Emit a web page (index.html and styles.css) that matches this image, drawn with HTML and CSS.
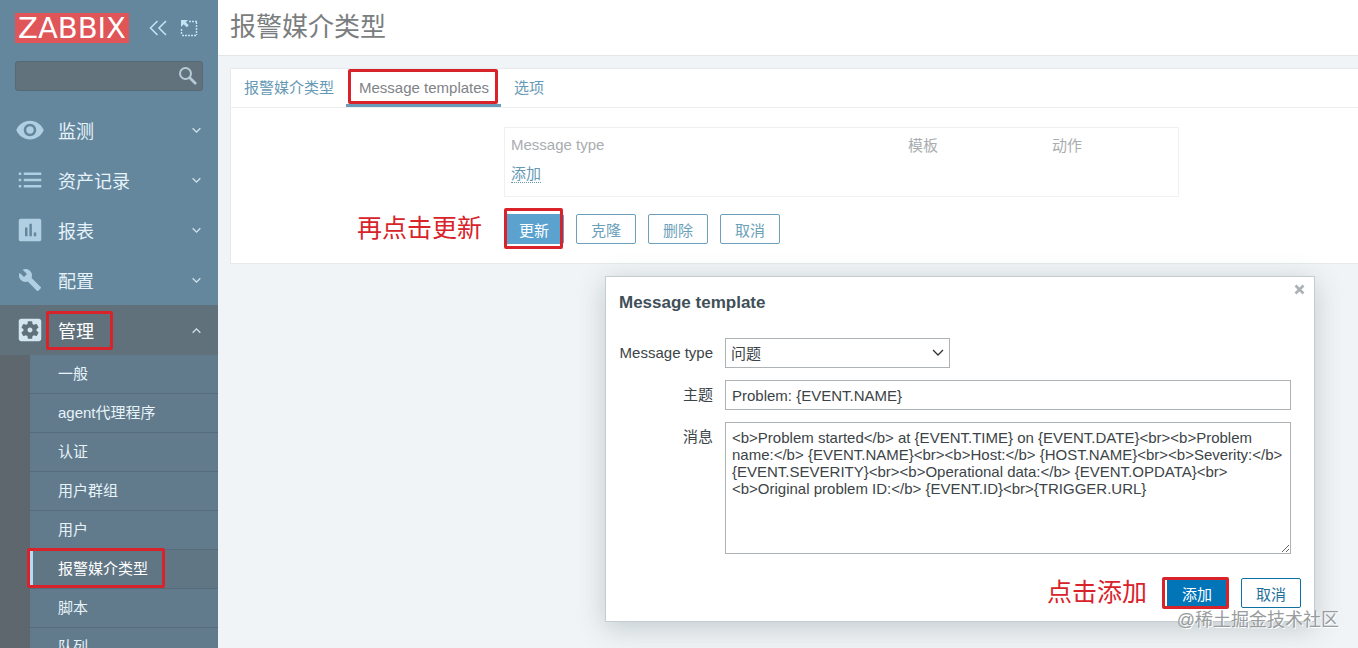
FILE: index.html
```html
<!DOCTYPE html>
<html lang="zh-CN">
<head>
  <meta charset="UTF-8" />
  <meta name="viewport" content="width=device-width, initial-scale=1.0" />
  <title>报警媒介类型</title>
  <link rel="stylesheet" href="styles.css">
</head>
<body>
  <aside class="sidebar">
    <div class="sidebar-header">
      <a href="#" class="logo">ZABBIX</a>
      <button type="button" class="icon-button" aria-label="Collapse sidebar">
        <svg width="20" height="18" viewBox="0 0 20 18"><path d="M9.500 2L2.500 9l7 7M18 2l-7 7 7 7" fill="none" stroke="currentColor" stroke-width="1.600"/></svg>
      </button>
      <button type="button" class="icon-button" aria-label="Hide sidebar">
        <svg width="18" height="18" viewBox="0 0 18 18"><path d="M9 2.500h8M16.500 3v13M16 16.500H1M1.500 15V9" fill="none" stroke="currentColor" stroke-width="1.400" stroke-dasharray="2 1"/><path d="M1 1h7L5.800 3.200l3 3-2.100 2.100-3-3L1 8z" fill="currentColor"/></svg>
      </button>
    </div>

    <form class="search">
      <input type="text" class="search-input" aria-label="搜索">
      <button type="button" class="search-button" aria-label="搜索">
        <svg width="20" height="20" viewBox="0 0 20 20" fill="none" stroke="currentColor"><circle cx="7.500" cy="7.500" r="5.500" stroke-width="2"/><path d="M11.500 11.500l6.500 6.500" stroke-width="2.600"/></svg>
      </button>
    </form>

    <nav>
      <ul class="menu">
        <li>
          <a href="#" class="menu-link">
            <svg class="menu-icon" viewBox="0 0 24 24"><path d="M12 4.500C7 4.500 2.730 7.610 1 12c1.730 4.390 6 7.500 11 7.500s9.270-3.110 11-7.500c-1.730-4.390-6-7.500-11-7.500zM12 17c-2.760 0-5-2.240-5-5s2.240-5 5-5 5 2.240 5 5-2.240 5-5 5zm0-8c-1.660 0-3 1.340-3 3s1.340 3 3 3 3-1.340 3-3-1.340-3-3-3z"/></svg>
            <span>监测</span>
            <svg class="chevron" viewBox="0 0 10 10"><path d="M1.500 3L5 6.500 8.500 3"/></svg>
          </a>
        </li>
        <li>
          <a href="#" class="menu-link">
            <svg class="menu-icon" viewBox="0 0 24 24"><path d="M3 6h2v2H3zM3 11h2v2H3zM3 16h2v2H3zM7 6h14v2H7zM7 11h14v2H7zM7 16h14v2H7z"/></svg>
            <span>资产记录</span>
            <svg class="chevron" viewBox="0 0 10 10"><path d="M1.500 3L5 6.500 8.500 3"/></svg>
          </a>
        </li>
        <li>
          <a href="#" class="menu-link">
            <svg class="menu-icon" viewBox="0 0 24 24"><path d="M19.500 3h-15C3.700 3 3 3.700 3 4.500v15c0 .8.700 1.500 1.500 1.500h15c.8 0 1.500-.7 1.500-1.500v-15c0-.8-.7-1.500-1.500-1.500zM10 17H8v-7h2zm3.500 0h-2V7h2zm3.500 0h-2v-3h2z"/></svg>
            <span>报表</span>
            <svg class="chevron" viewBox="0 0 10 10"><path d="M1.500 3L5 6.500 8.500 3"/></svg>
          </a>
        </li>
        <li>
          <a href="#" class="menu-link">
            <svg class="menu-icon" viewBox="-3 -3 30 30"><path d="M22.700 19l-9.100-9.100c.9-2.300.4-5-1.500-6.900-2-2-5-2.400-7.400-1.300L9 6 6 9 1.600 4.700C.4 7.100.9 10.100 2.900 12.100c1.900 1.900 4.600 2.400 6.900 1.500l9.100 9.100c.4.400 1 .4 1.400 0l2.300-2.300c.5-.4.500-1.100.1-1.400z"/></svg>
            <span>配置</span>
            <svg class="chevron" viewBox="0 0 10 10"><path d="M1.500 3L5 6.500 8.500 3"/></svg>
          </a>
        </li>
        <li>
          <a href="#" class="menu-link menu-link-open">
            <svg class="menu-icon" viewBox="0 0 24 24"><path d="M12 10c-1.100 0-2 .9-2 2s.9 2 2 2 2-.9 2-2-.9-2-2-2zm7-7H5c-1.110 0-2 .9-2 2v14c0 1.100.89 2 2 2h14c1.110 0 2-.9 2-2V5c0-1.100-.89-2-2-2zm-1.750 9c0 .23-.02.46-.05.68l1.480 1.160c.13.110.17.3.08.45l-1.400 2.420c-.09.15-.27.21-.43.15l-1.740-.7c-.36.28-.76.51-1.180.69l-.26 1.850c-.03.17-.18.3-.35.3h-2.800c-.17 0-.32-.13-.35-.29l-.26-1.850c-.43-.18-.82-.41-1.180-.69l-1.740.7c-.16.06-.34 0-.43-.15l-1.400-2.420c-.09-.15-.05-.34.08-.45l1.480-1.160c-.03-.23-.05-.46-.05-.69 0-.23.02-.46.05-.68l-1.480-1.160c-.13-.11-.17-.3-.08-.45l1.400-2.420c.09-.15.27-.21.43-.15l1.740.7c.36-.28.76-.51 1.180-.69l.26-1.850c.03-.17.18-.3.35-.3h2.800c.17 0 .32.13.35.29l.26 1.850c.43.18.82.41 1.180.69l1.740-.7c.16-.06.34 0 .43.15l1.400 2.420c.09.15.05.34-.08.45l-1.480 1.160c.03.23.05.46.05.69z"/></svg>
            <span class="marked mark-menu">管理</span>
            <svg class="chevron" viewBox="0 0 10 10"><path d="M1.500 7L5 3.500 8.500 7"/></svg>
          </a>
          <ul class="submenu">
            <li><a href="#">一般</a></li>
            <li><a href="#">agent代理程序</a></li>
            <li><a href="#">认证</a></li>
            <li><a href="#">用户群组</a></li>
            <li><a href="#">用户</a></li>
            <li><a href="#" class="selected marked mark-submenu">报警媒介类型</a></li>
            <li><a href="#">脚本</a></li>
            <li><a href="#">队列</a></li>
          </ul>
        </li>
      </ul>
    </nav>
  </aside>

  <main class="content">
    <header class="page-header">
      <h1>报警媒介类型</h1>
    </header>

    <form class="panel">
      <nav class="tabs">
        <a href="#" class="tab">报警媒介类型</a>
        <a href="#" class="tab tab-active marked mark-tab">Message templates</a>
        <a href="#" class="tab">选项</a>
      </nav>

      <div class="form-body">
        <div class="table-frame">
          <table class="templates">
            <thead>
              <tr>
                <th class="col-type">Message type</th>
                <th class="col-template">模板</th>
                <th>动作</th>
              </tr>
            </thead>
            <tbody>
              <tr>
                <td colspan="3"><a href="#" class="link-action">添加</a></td>
              </tr>
            </tbody>
          </table>
        </div>
        <p class="note">再点击更新</p>
        <div class="buttons">
          <span class="marked mark-update"><button type="button" class="btn btn-muted-primary">更新</button></span>
          <button type="button" class="btn btn-muted">克隆</button>
          <button type="button" class="btn btn-muted">删除</button>
          <button type="button" class="btn btn-muted">取消</button>
        </div>
      </div>
    </form>
  </main>

  <div class="dialog" role="dialog" aria-labelledby="dialog-title">
    <button type="button" class="dialog-close" aria-label="关闭">
      <svg width="11" height="11" viewBox="0 0 11 11"><path d="M1.500 1.500l8 8M9.500 1.500l-8 8" stroke="currentColor" stroke-width="2.600"/></svg>
    </button>
    <h2 id="dialog-title">Message template</h2>
    <form>
      <div class="fields">
        <label for="message-type">Message type</label>
        <select id="message-type">
          <option>问题</option>
        </select>
        <label for="subject">主题</label>
        <input type="text" id="subject" value="Problem: {EVENT.NAME}">
        <label for="message">消息</label>
        <textarea id="message" spellcheck="false">&lt;b&gt;Problem started&lt;/b&gt; at {EVENT.TIME} on {EVENT.DATE}&lt;br&gt;&lt;b&gt;Problem name:&lt;/b&gt; {EVENT.NAME}&lt;br&gt;&lt;b&gt;Host:&lt;/b&gt; {HOST.NAME}&lt;br&gt;&lt;b&gt;Severity:&lt;/b&gt; {EVENT.SEVERITY}&lt;br&gt;&lt;b&gt;Operational data:&lt;/b&gt; {EVENT.OPDATA}&lt;br&gt;&lt;b&gt;Original problem ID:&lt;/b&gt; {EVENT.ID}&lt;br&gt;{TRIGGER.URL}</textarea>
      </div>
      <div class="dialog-footer">
        <p class="note">点击添加</p>
        <span class="marked mark-add"><button type="button" class="btn btn-primary">添加</button></span>
        <button type="button" class="btn">取消</button>
      </div>
    </form>
  </div>

  <div class="watermark">@稀土掘金技术社区</div>
</body>
</html>
```

FILE: styles.css
```css
*, *::after {
  box-sizing: border-box;
}
body {
  display: flex;
  position: relative;
  height: 100vh;
  margin: 0;
  overflow: hidden;
  background-color: #f1f4f6;
  color: #3c4447;
  font-family: "Liberation Sans", "Noto Sans CJK SC", sans-serif;
  font-size: 15px;
}
h1, h2, p, ul {
  margin: 0;
  padding: 0;
}
ul {
  list-style: none;
}
a {
  text-decoration: none;
}
button, input, select, textarea {
  font-family: inherit;
  font-size: 15px;
}

/* sidebar */
.sidebar {
  flex: none;
  width: 218px;
  background-color: #64879d;
}
.sidebar-header {
  display: flex;
  align-items: center;
  padding: 13px 15px 0;
}
.logo {
  flex: none;
  width: 114px;
  margin-right: 19px;
  background-color: #e05558;
  color: #fff;
  font-family: "DejaVu Sans", sans-serif;
  font-size: 29px;
  line-height: 30px;
  text-align: center;
}
.icon-button {
  display: flex;
  flex: none;
  margin-right: 12px;
  padding: 0;
  border: 0;
  background: none;
  color: #c3e2f3;
}
.icon-button:last-child {
  margin-right: 0;
}
.search {
  display: flex;
  margin: 18px 15px 14px;
  border: 1px solid #566975;
  border-radius: 3px;
  background-color: #61727d;
}
.search-input {
  flex: 1;
  min-width: 0;
  height: 28px;
  border: 0;
  background: none;
  color: #fff;
}
.search-button {
  display: flex;
  align-items: center;
  padding: 0 4px;
  border: 0;
  background: none;
  color: #b6cbd8;
}
.menu-link {
  display: flex;
  align-items: center;
  height: 50px;
  padding: 0 16px 0 15px;
  color: #e6f3fa;
  font-size: 18px;
}
.menu-icon {
  width: 30px;
  height: 30px;
  margin-right: 13px;
  fill: #b0cfe2;
}
.chevron {
  width: 11px;
  height: 11px;
  margin-left: auto;
  fill: none;
  stroke: #cfe3ee;
  stroke-width: 1.2;
}
.menu-link-open {
  background-color: #60717c;
  color: #fff;
}
.menu-link-open .menu-icon {
  fill: #d3e6f2;
}
.submenu {
  border-left: 30px solid #5d676d;
  background-color: #627b8c;
}
.submenu li {
  border-bottom: 1px solid #566c7b;
}
.submenu a {
  display: block;
  padding-left: 28px;
  color: #e6f3fa;
  line-height: 38px;
}
.submenu .selected {
  padding-left: 25px;
  border-left: 3px solid #b5dcf2;
  background-color: #617684;
  color: #fff;
}

/* page */
.content {
  flex: 1;
  min-width: 0;
}
.page-header {
  padding: 0 12px;
  border-bottom: 1px solid #e3e7ea;
  background-color: #fff;
}
.page-header h1 {
  color: #7b7e80;
  font-size: 26px;
  font-weight: normal;
  line-height: 55px;
}
.panel {
  margin: 12px 0 0 12px;
  border: 1px solid #e6eaec;
  border-right: 0;
  background-color: #fff;
}
.tabs {
  display: flex;
  border-bottom: 1px solid #eceff0;
}
.tab {
  height: 38px;
  padding: 0 12px 0 13px;
  color: #6699b5;
  line-height: 38px;
}
.tab-active {
  border-bottom: 3px solid #6a9cba;
  color: #808386;
}
.form-body {
  display: grid;
  grid-template-columns: 251px 1fr;
  gap: 17px 22px;
  padding: 19px 0;
}
.table-frame {
  grid-column: 2;
  width: 675px;
  min-height: 70px;
  padding: 2px 0 0 6px;
  border: 1px solid #eef0f1;
}
.templates {
  width: 100%;
  border-collapse: collapse;
  table-layout: fixed;
}
.templates th, .templates td {
  height: 28px;
  padding: 0;
  color: #a9adb0;
  font-weight: normal;
  text-align: left;
}
.templates .col-type {
  width: 397px;
}
.templates .col-template {
  width: 144px;
}
.link-action {
  border-bottom: 1px dotted #6699b5;
  color: #6699b5;
}
.buttons {
  display: flex;
  gap: 12px;
}
.btn {
  width: 60px;
  height: 30px;
  padding: 0;
  border: 1px solid #0f70a4;
  border-radius: 2px;
  background-color: #fff;
  color: #1f6f9c;
}
.btn-primary {
  background-color: #0275b8;
  color: #fff;
}
.btn-muted {
  border-color: #6b9fba;
  color: #6b9fba;
}
.btn-muted-primary {
  border-color: #5ba2cf;
  background-color: #5ba2cf;
  color: #fff;
}

/* dialog */
.dialog {
  position: absolute;
  top: 276px;
  right: 43px;
  width: 710px;
  padding: 0 13px 13px;
  border: 1px solid #c5ccd0;
  background-color: #fff;
  box-shadow: 0 6px 26px rgba(40, 70, 80, 0.24);
}
.dialog-close {
  display: flex;
  position: absolute;
  top: 7px;
  right: 9px;
  padding: 0;
  border: 0;
  background: none;
  color: #abb1b5;
}
.dialog h2 {
  padding: 15px 0 24px;
  color: #3f5058;
  font-size: 17px;
  line-height: 22px;
}
.fields {
  display: grid;
  grid-template-columns: 94px 1fr;
  gap: 12px;
  padding-right: 10px;
}
.fields label {
  line-height: 30px;
  text-align: right;
}
.fields input, .fields select, .fields textarea {
  height: 30px;
  margin: 0;
  padding: 0 6px;
  border: 1px solid #acb2b5;
  border-radius: 0;
  background-color: #fff;
  color: #3c4447;
}
.fields select {
  width: 225px;
  padding: 0 5px;
  appearance: none;
  background-image: url("data:image/svg+xml,%3Csvg xmlns='http://www.w3.org/2000/svg' width='12' height='8'%3E%3Cpath d='M1 1l5 5 5-5' fill='none' stroke='%23333' stroke-width='1.3'/%3E%3C/svg%3E");
  background-repeat: no-repeat;
  background-position: right 5px center;
}
.fields textarea {
  height: 132px;
  padding: 6px;
  line-height: 17px;
  resize: vertical;
}
.dialog-footer {
  display: flex;
  justify-content: flex-end;
  gap: 14px;
  padding-top: 24px;
}

/* red frames and notes drawn over the controls */
.marked {
  position: relative;
}
.marked::after {
  content: "";
  position: absolute;
  border: 3px solid #d8232a;
  border-radius: 2px;
  pointer-events: none;
}
.mark-menu::after {
  inset: -6px -19px -7px -12px;
}
.mark-submenu::after {
  top: -2px;
  bottom: 0;
  left: -6px;
  width: 138px;
}
.mark-tab::after {
  inset: 0 3px 0 2px;
}
.mark-update::after {
  inset: -6px 1px -5px 0;
}
.mark-add::after {
  inset: -1px -2px -1px -5px;
}
.note {
  color: #d8232a;
  font-size: 25px;
  line-height: 28px;
  text-align: right;
}
.dialog-footer .note {
  margin-right: 6px;
}
.watermark {
  position: absolute;
  right: 19px;
  bottom: 17px;
  color: #999c9e;
  font-size: 18px;
  text-shadow: 1px 1px 0 #fff;
}
```
